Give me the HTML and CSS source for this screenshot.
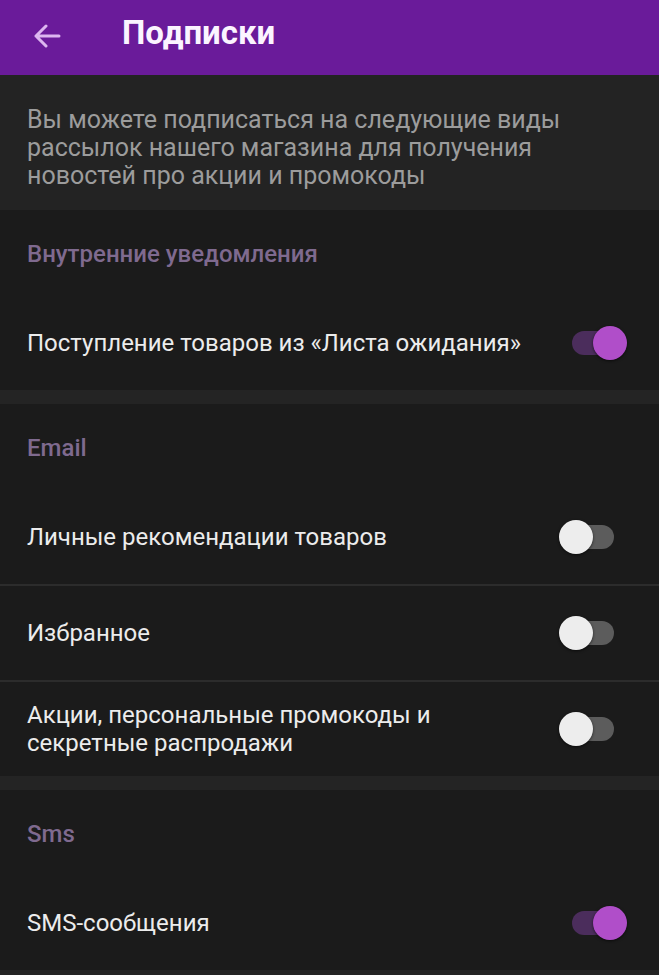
FILE: index.html
```html
<!DOCTYPE html>
<html lang="ru">
<head>
<meta charset="utf-8">
<link rel="stylesheet" href="styles.css">
</head>
<body>
<header class="appbar">
  <svg class="back" width="28" height="24" viewBox="0 0 28 24">
    <path d="M26 12H3M13 2L3 12l10 10" fill="none" stroke="#dcb6f0" stroke-width="3" stroke-linecap="round" stroke-linejoin="round"/>
  </svg>
  <h1 class="title">Подписки</h1>
</header>
<div class="intro">Вы можете подписаться на следующие виды рассылок нашего магазина для получения новостей про акции и промокоды</div>
<main class="cards">
  <section class="card">
    <div class="card-title">Внутренние уведомления</div>
    <div class="row">
      <span class="label">Поступление товаров из «Листа ожидания»</span>
      <span class="switch on"><span class="track"></span><span class="thumb"></span></span>
    </div>
  </section>
  <section class="card">
    <div class="card-title">Email</div>
    <div class="row">
      <span class="label">Личные рекомендации товаров</span>
      <span class="switch"><span class="track"></span><span class="thumb"></span></span>
    </div>
    <div class="divider"></div>
    <div class="row">
      <span class="label">Избранное</span>
      <span class="switch"><span class="track"></span><span class="thumb"></span></span>
    </div>
    <div class="divider"></div>
    <div class="row">
      <span class="label">Акции, персональные промокоды и<br>секретные распродажи</span>
      <span class="switch"><span class="track"></span><span class="thumb"></span></span>
    </div>
  </section>
  <section class="card">
    <div class="card-title">Sms</div>
    <div class="row">
      <span class="label">SMS-сообщения</span>
      <span class="switch on"><span class="track"></span><span class="thumb"></span></span>
    </div>
  </section>
</main>
</body>
</html>
```
FILE: styles.css
```css
* { box-sizing: border-box; }
html, body { margin: 0; padding: 0; }
body {
  background: #242424;
  font-family: Roboto, "Noto Sans", sans-serif;
  width: 659px;
  height: 975px;
  overflow: hidden;
}
.appbar {
  height: 75px;
  background: #6a1b9a;
  display: flex;
  align-items: center;
  padding-left: 33px;
}
.back { display: block; margin-top: -3px; }
.title {
  margin: -10px 0 0 61px;
  color: #fbf4ff;
  font-size: 33px;
  font-weight: 700;
  line-height: 40px;
}
.intro {
  background: #232323;
  color: #9c9c9c;
  font-size: 25px;
  line-height: 28px;
  padding: 31px 30px 20px 27px;
}
.cards {
  display: flex;
  flex-direction: column;
  gap: 14px;
}
.card { background: #1b1b1b; }
.card-title {
  color: #7f6a8f;
  font-size: 24px;
  font-weight: 500;
  line-height: 28px;
  padding: 30px 27px 28px;
}
.row {
  min-height: 94px;
  display: flex;
  align-items: center;
  justify-content: space-between;
  padding: 17px 32px 17px 27px;
}
.label {
  color: #ececec;
  font-size: 24px;
  line-height: 28px;
}
.divider { height: 2px; background: #2c2c2c; }
.switch {
  position: relative;
  width: 68px;
  height: 34px;
  flex: none;
}
.track {
  position: absolute;
  left: 13px;
  right: 13px;
  top: 5px;
  height: 24px;
  border-radius: 12px;
  background: #5c5c5c;
}
.thumb {
  position: absolute;
  top: 0;
  left: 0;
  width: 34px;
  height: 34px;
  border-radius: 50%;
  background: #ededed;
  box-shadow: 0 1px 3px rgba(0,0,0,0.6);
}
.switch.on .track { background: #4b2d5c; }
.switch.on .thumb { left: 34px; background: #b04ec9; }
```
